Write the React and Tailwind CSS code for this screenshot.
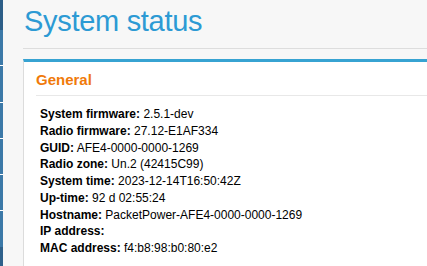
const rows = [
  ["System firmware:", "2.5.1-dev"],
  ["Radio firmware:", "27.12-E1AF334"],
  ["GUID:", "AFE4-0000-0000-1269"],
  ["Radio zone:", "Un.2 (42415C99)"],
  ["System time:", "2023-12-14T16:50:42Z"],
  ["Up-time:", "92 d 02:55:24"],
  ["Hostname:", "PacketPower-AFE4-0000-0000-1269"],
  ["IP address:", ""],
  ["MAC address:", "f4:b8:98:b0:80:e2"],
];

export default function App() {
  return (
    <div
      className="flex h-[266px] w-[427px] overflow-hidden bg-[#f7f7f7]"
      style={{ fontFamily: '"Liberation Sans", Arial, sans-serif' }}
    >
      {/* side nav strip */}
      <div className="flex w-[3px] shrink-0 flex-col bg-[#3c79a8]">
        <div className="h-[30px] bg-[#2d5e88]" />
        <div className="h-[36px] border-b border-white" />
        <div className="h-[37px] border-b border-white" />
        <div className="h-[36px] border-b border-white" />
        <div className="h-[36px] border-b border-white" />
        <div className="h-[36px] border-b border-white" />
        <div className="h-[36px]" />
        <div className="flex-1 bg-[#2f618b]" />
      </div>

      <div className="flex min-w-0 flex-1 flex-col pl-[20px]">
        <h1 className="h-[49px] border-b border-[#dddddd] pl-px pt-[3px] text-[29px] leading-[36px] tracking-[-0.3px] text-[#2c9ad4]">
          System status
        </h1>

        <div className="mt-[10px] w-[420px] flex-1 border-l border-t-[3px] border-[#dcdcdc] border-t-[#37a3d2] bg-white pl-[12px]">
          <h2 className="h-[34px] border-b border-[#e8e8e8] pt-[8px] text-[15px] font-bold leading-[20px] text-[#f07a0a]">
            General
          </h2>

          <div className="pl-[4px] pt-[10px] text-[12px] leading-[16.75px] text-black">
            {rows.map(([label, value]) => (
              <div key={label} className="whitespace-nowrap">
                <span className="font-bold">{label}</span>
                {value ? ` ${value}` : ""}
              </div>
            ))}
          </div>
        </div>
      </div>
    </div>
  );
}
